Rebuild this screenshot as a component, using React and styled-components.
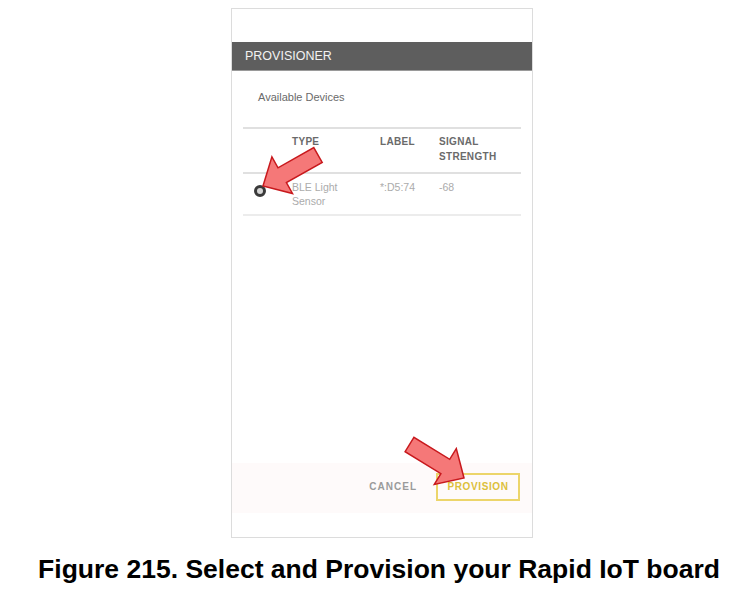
import React from "react";
import styled, { createGlobalStyle } from "styled-components";

const GlobalStyle = createGlobalStyle`
  html, body {
    margin: 0;
    padding: 0;
    background: #fff;
  }
  body {
    font-family: "Liberation Sans", Arial, sans-serif;
  }
`;

const devices = [
  { type: ["BLE Light", "Sensor"], label: "*:D5:74", signal: "-68", selected: true },
];

export default function App() {
  return (
    <Page>
      <GlobalStyle />
      <Phone>
        <TopSpace />
        <AppBar>PROVISIONER</AppBar>
        <SectionTitle>Available Devices</SectionTitle>
        <DeviceTable>
          <HeadRow>
            <span></span>
            <HeadCell>TYPE</HeadCell>
            <HeadCell>LABEL</HeadCell>
            <HeadCell>SIGNAL<br />STRENGTH</HeadCell>
          </HeadRow>
          {devices.map((d, i) => (
            <DeviceRow key={i}>
              <RadioCell><Radio checked={d.selected} /></RadioCell>
              <Cell>{d.type[0]}<br />{d.type[1]}</Cell>
              <Cell>{d.label}</Cell>
              <Cell>{d.signal}</Cell>
            </DeviceRow>
          ))}
        </DeviceTable>
        <Filler />
        <Footer>
          <TextButton>CANCEL</TextButton>
          <OutlineButton>PROVISION</OutlineButton>
        </Footer>
        <BottomSpace />
      </Phone>
      <Caption>Figure 215. Select and Provision your Rapid IoT board</Caption>
      <Arrows />
    </Page>
  );
}

// callout arrows drawn over the screenshot
const Arrows = () => (
  <ArrowLayer width="738" height="609" viewBox="0 0 738 609">
    <polygon
      points="313.8,147.6 322.2,162.4 286.4,182.6 292.5,193.5 263,186 271.9,156.9 278,167.8"
      fill="#f57878" stroke="#c8191d" strokeWidth="1.5"
    />
    <polygon
      points="413.9,437.3 405.1,451.7 440.9,473.7 434.3,484.4 464,478 456.3,448.6 449.7,459.3"
      fill="#f57878" stroke="#c8191d" strokeWidth="1.5"
    />
  </ArrowLayer>
);

const Page = styled.div`
  position: relative;
  width: 738px;
  height: 609px;
  display: flex;
  flex-direction: column;
  align-items: center;
  padding-left: 26px;
  padding-top: 8px;
  box-sizing: border-box;
`;

const ArrowLayer = styled.svg`
  position: absolute;
  left: 0;
  top: 0;
  pointer-events: none;
`;

const Phone = styled.div`
  width: 302px;
  height: 530px;
  box-sizing: border-box;
  border: 1px solid #dcdcdc;
  display: flex;
  flex-direction: column;
  background: #fff;
`;

const TopSpace = styled.div`
  height: 33px;
`;

const AppBar = styled.div`
  height: 29px;
  box-sizing: border-box;
  background: #5e5e5e;
  border-bottom: 1px solid #9a9a9a;
  color: #f2f2f2;
  font-size: 12.5px;
  line-height: 29px;
  padding-left: 13px;
`;

const SectionTitle = styled.div`
  height: 56px;
  box-sizing: border-box;
  padding: 20px 0 0 26px;
  font-size: 11px;
  line-height: 13px;
  color: #6a6a6a;
`;

const DeviceTable = styled.div`
  margin: 0 11px;
  display: flex;
  flex-direction: column;
`;

const Row = styled.div`
  display: grid;
  grid-template-columns: 49px 88px 59px 1fr;
  border-top: 2px solid #e0e0e0;
  box-sizing: border-box;
`;

const HeadRow = styled(Row)`
  height: 45px;
  padding-top: 5px;
`;

const DeviceRow = styled(Row)`
  height: 44px;
  padding-top: 6px;
  border-bottom: 2px solid #ececec;
`;

const HeadCell = styled.div`
  font-size: 10px;
  line-height: 15px;
  font-weight: bold;
  letter-spacing: 0.3px;
  color: #6a6a6a;
`;

const Cell = styled.div`
  font-size: 10.5px;
  line-height: 14px;
  color: #ababab;
`;

const RadioCell = styled.div`
  display: flex;
  justify-content: center;
  padding: 5px 15px 0 0;
  box-sizing: border-box;
  align-items: flex-start;
`;

const Radio = styled.span`
  width: 12px;
  height: 12px;
  box-sizing: border-box;
  border-radius: 50%;
  border: 3px solid #3a3a3a;
  background: ${p => (p.checked ? "#d6d6d6" : "#fff")};
`;

const Filler = styled.div`
  flex: 1;
`;

const Footer = styled.div`
  height: 50px;
  box-sizing: border-box;
  background: #fefafa;
  display: flex;
  align-items: center;
  justify-content: flex-end;
  gap: 19px;
  padding: 0 12px 3px 0;
`;

const TextButton = styled.span`
  font-size: 10px;
  font-weight: bold;
  letter-spacing: 1px;
  color: #9a9a9a;
`;

const OutlineButton = styled.span`
  width: 84px;
  height: 28px;
  box-sizing: border-box;
  border: 2px solid #ecd56a;
  display: flex;
  align-items: center;
  justify-content: center;
  font-size: 10px;
  font-weight: bold;
  letter-spacing: 0.6px;
  color: #dcc03c;
`;

const BottomSpace = styled.div`
  height: 24px;
`;

const Caption = styled.div`
  margin-top: 16px;
  margin-right: 6px;
  font-size: 26.5px;
  line-height: 30px;
  font-weight: bold;
  color: #000;
  white-space: nowrap;
`;
